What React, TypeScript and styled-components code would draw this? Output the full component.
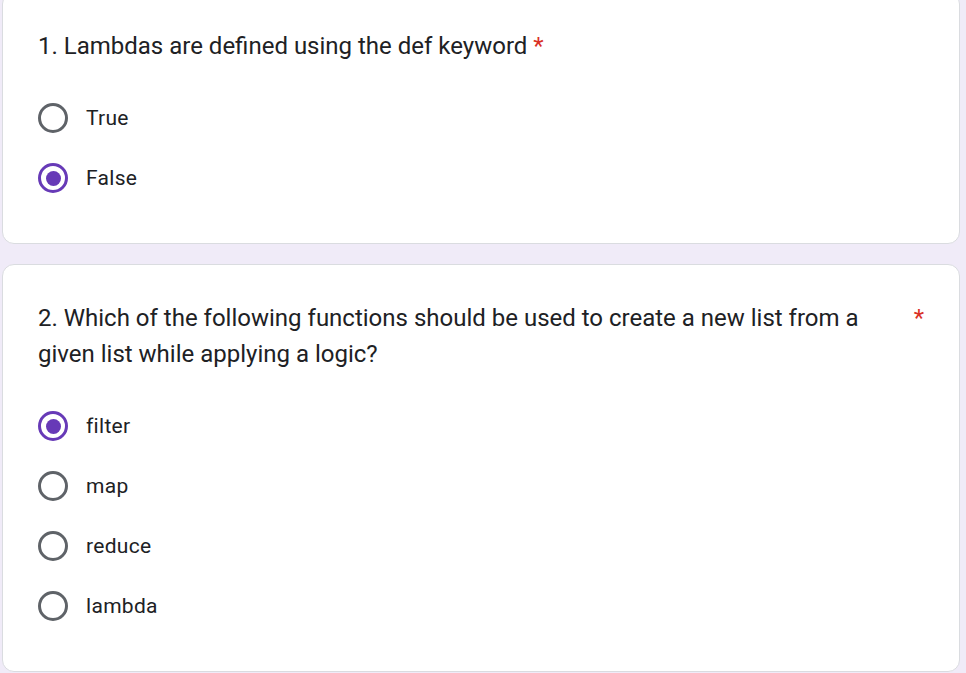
import React, {FC} from 'react';
import styled, {createGlobalStyle} from "styled-components";

type Question = {
    title: string;
    options: string[];
    selected: string;
};

const questions: Question[] = [
    {
        title: '1. Lambdas are defined using the def keyword',
        options: ['True', 'False'],
        selected: 'False',
    },
    {
        title: '2. Which of the following functions should be used to create a new list from a given list while applying a logic?',
        options: ['filter', 'map', 'reduce', 'lambda'],
        selected: 'filter',
    },
];

const QuestionCard: FC<{question: Question}> = ({question}) => (
    <Card>
        <Header>
            <Title>{question.title}</Title>
            <Required>*</Required>
        </Header>
        <Options>
            {question.options.map(option => (
                <Option key={option}>
                    <Radio checked={option === question.selected}/>
                    <Label>{option}</Label>
                </Option>
            ))}
        </Options>
    </Card>
);

const App: FC = () => (
    <>
        <GlobalStyle/>
        <Page>
            {questions.map(q => <QuestionCard key={q.title} question={q}/>)}
        </Page>
    </>
);

export default App;

const GlobalStyle = createGlobalStyle`
  html, body {
    margin: 0;
    padding: 0;
    background: #f0ebf8;
    font-family: Roboto, "Liberation Sans", Arial, sans-serif;
    overflow: hidden;
  }
`;

const Page = styled.div`
  display: flex;
  flex-direction: column;
  gap: 20px;
  margin-top: -8px;
  padding: 0 6px 0 2px;
`;

const Card = styled.div`
  background: #fff;
  border: 1px solid #dadce0;
  border-radius: 12px;
  padding: 35px;
`;

const Header = styled.div`
  display: flex;
  align-items: flex-start;
  padding-bottom: 24px;
`;

const Title = styled.div`
  font-size: 24px;
  line-height: 36px;
  color: #202124;
  letter-spacing: 0;
  flex: 0 1 auto;
`;

const Required = styled.span`
  color: #d93025;
  font-size: 24px;
  line-height: 36px;
  padding-left: 6px;
  flex: 0 0 auto;
`;

const Options = styled.div`
  display: flex;
  flex-direction: column;
`;

const Option = styled.div`
  display: flex;
  align-items: center;
  height: 60px;
`;

const Radio = styled.div<{checked: boolean}>`
  box-sizing: border-box;
  width: 30px;
  height: 30px;
  border-radius: 50%;
  border: 3px solid ${p => p.checked ? '#673ab7' : '#5f6368'};
  display: flex;
  align-items: center;
  justify-content: center;
  flex: 0 0 auto;
  &::after {
    content: '';
    display: ${p => p.checked ? 'block' : 'none'};
    width: 15px;
    height: 15px;
    border-radius: 50%;
    background: #673ab7;
  }
`;

const Label = styled.span`
  margin-left: 18px;
  font-size: 21px;
  line-height: 30px;
  color: #202124;
  letter-spacing: 0.3px;
`;
